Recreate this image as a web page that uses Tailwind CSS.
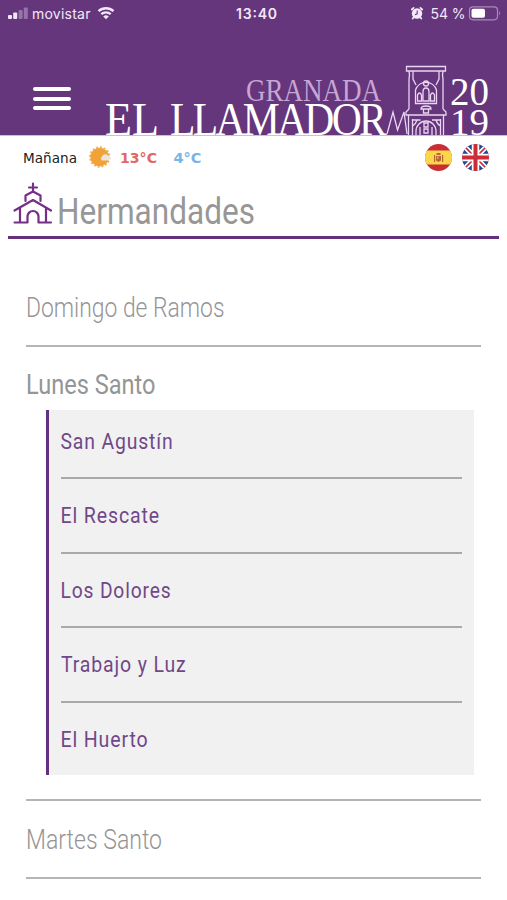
<!DOCTYPE html>
<html lang="es">
<head>
<meta charset="utf-8">
<title>El Llamador</title>
<script src="https://cdn.jsdelivr.net/npm/@tailwindcss/browser@4"></script>
</head>
<body class="bg-white w-[507px] h-[900px] overflow-hidden font-['Roboto',sans-serif]">
<header class="h-[135px] bg-[#65367c] flex flex-col text-white">
  <svg class="w-[507px] h-[28px] shrink-0 font-['Inter',sans-serif]" viewBox="0 0 507 28" fill="#f3e8f8">
    <rect x="8" y="15" width="4" height="4" rx="1"/><rect x="13.2" y="12.500" width="4" height="6.500" rx="1"/>
    <rect x="18.600" y="10" width="4" height="9" rx="1" opacity=".35"/><rect x="23.800" y="7.500" width="4" height="11.500" rx="1" opacity=".35"/>
    <text x="32" y="18.600" font-size="14" textLength="58.500">movistar</text>
    <g fill="none" stroke="#f3e8f8" stroke-width="2.300"><path d="M98.500 11.200a11 11 0 0 1 15 0M101.300 14.200a7 7 0 0 1 9.400 0"/></g>
    <path d="M103.200 16.400a4.200 4.200 0 0 1 5.600 0L106 19.300z"/>
    <text x="236" y="18.800" font-size="14" font-weight="600" textLength="41">13:40</text>
    <circle cx="417" cy="13.500" r="5.200"/><path d="M411.800 9.500l1.800-1.600M420.400 7.900l1.800 1.600M413.500 17.500l-.8 1M420.500 17.500l.8 1" stroke="#f3e8f8" stroke-width="1.800" stroke-linecap="round"/>
    <path d="M417.200 10.500v3.300l-2.200 1" fill="none" stroke="#65367c" stroke-width="1.100"/>
    <text x="430.500" y="18.800" font-size="14" textLength="35">54 %</text>
    <rect x="469.500" y="6.800" width="28" height="13" rx="3.500" fill="none" stroke="#a98ab8" stroke-width="1.200"/>
    <rect x="471.500" y="8.800" width="13.500" height="9" rx="1.800" fill="#fff"/><path d="M499 11.200q2 2 0 4z" fill="#a98ab8"/>
  </svg>
  <div class="flex h-[107px]">
    <button class="w-[38px] h-[23px] ml-[33px] mt-[59px] flex flex-col justify-between shrink-0" aria-label="Menú">
      <span class="block h-[4px] w-full rounded-full bg-white"></span><span class="block h-[4px] w-full rounded-full bg-white"></span><span class="block h-[4px] w-full rounded-full bg-white"></span>
    </button>
    <svg class="w-[407px] h-[75px] ml-[29px] mt-[32px] shrink-0 font-['Liberation_Serif',serif]" viewBox="100 60 407 75" fill="#fff">
      <text x="246" y="100.500" font-size="32.500" textLength="135" lengthAdjust="spacingAndGlyphs" fill="#c7a6d5">GRANADA</text>
      <text x="105" y="135" font-size="46" textLength="54" lengthAdjust="spacingAndGlyphs">EL</text>
      <text x="170" y="135" font-size="46" letter-spacing="-3" textLength="214" lengthAdjust="spacingAndGlyphs">LLAMADOR</text>
      <text x="450" y="105" font-size="40" textLength="39" lengthAdjust="spacingAndGlyphs">20</text>
      <text x="450" y="135" font-size="38" textLength="39" lengthAdjust="spacingAndGlyphs">19</text>
      <g fill="none" stroke="#ead5f2" stroke-width="1.300">
        <path d="M387 134l6-22 4.500 18 6.500-18 3 22"/>
        <path d="M406.500 66.500h39v4.500h-39zM409 71q1 4 0 8v30M443 71q-1 4 0 8v30M413 71v8l3 6M439 71v8l-3 6M409 109l-3 3v3h40v-3l-3-3M408.500 115v20M443.500 115v20M412.500 120h8M432 120h8.500M412.500 119v16M440.500 119v16M417 120q-1 4-4.500 6M436 120q1 4 4.500 6"/>
        <path d="M415.500 103.500V90a11 11 0 0 1 21 0v13.500z"/>
        <circle cx="426" cy="83.500" r="2.500"/><path d="M423 101v-9q0-4 3-4t3 4v9zM417.500 101v-6q2-4 4 0v6zM430.500 101v-6q2-4 4 0v6zM421 109q0-3 5-3t5 3zM423.500 109v4h5v-4"/>
        <path d="M416 135v-4a10 10 0 0 1 20 0v4M420 135v-8M432 135v-8M424 123h4v4h-4zM424 129h4v4h-4z"/>
      </g>
    </svg>
  </div>
</header>
<div class="h-[45px] flex border-t border-[#d9b5e5]">
  <svg class="w-[220px] h-[44px] shrink-0 font-['DejaVu_Sans',sans-serif]" viewBox="0 136 220 44">
    <text x="23" y="163" font-size="13.500" textLength="54" lengthAdjust="spacingAndGlyphs" fill="#222">Mañana</text>
    <circle cx="99.700" cy="157" r="9.700" fill="none" stroke="#f2b45a" stroke-width="2" stroke-dasharray="2 1.800"/><circle cx="99.700" cy="157" r="9.300" fill="#f1a338"/>
    <path d="M102 160.500a2.500 2.500 0 0 1 0-4 3.500 3.500 0 0 1 6-1 2.700 2.700 0 0 1 1 5z" fill="#ece4de"/>
    <text x="120" y="163" font-size="13.500" font-weight="700" textLength="37" lengthAdjust="spacingAndGlyphs" fill="#e26765">13°C</text>
    <text x="173.500" y="163" font-size="13.500" font-weight="700" textLength="28" lengthAdjust="spacingAndGlyphs" fill="#78b4e8">4°C</text>
  </svg>
  <div class="flex gap-[10px] ml-[205px] mt-[8px]">
    <svg class="size-[27px]" viewBox="0 0 27 27"><defs><clipPath id="c"><circle cx="13.500" cy="13.500" r="13.500"/></clipPath></defs><g clip-path="url(#c)"><path fill="#c92e35" d="M0 0h27v27H0z"/><path fill="#fbd64a" d="M0 6.500h27v14H0z"/><path fill="#b76532" d="M11 12h5v4.500L13.500 18 11 16.500zM11.500 9h4v2h-4zM9 11h1.200v7H9zM17 11h1.200v7H17z"/><path fill="#e5a65b" d="M12 12.500h1.500V15H12z"/></g></svg>
    <svg class="size-[27px]" viewBox="0 0 27 27"><g clip-path="url(#c)"><path fill="#24468a" d="M0 0h27v27H0z"/><path d="M0 0l27 27M27 0L0 27" stroke="#fff" stroke-width="5"/><path d="M0 0l27 27M27 0L0 27" stroke="#cc3342" stroke-width="1.700"/><path d="M13.500 0v27M0 13.500h27" stroke="#fff" stroke-width="7.500"/><path d="M13.500 0v27M0 13.500h27" stroke="#cc2b39" stroke-width="4"/></g></svg>
  </div>
</div>
<h1 class="mx-[8px] h-[59px] border-b-[3px] border-[#65317d] flex">
  <svg class="w-[46px] h-[56px] shrink-0" viewBox="8 180 46 56" fill="none" stroke="#752f86" stroke-width="2.200" stroke-linecap="round" stroke-linejoin="round"><path d="M33 183.500v8M29 187.500h8M25.500 201v-5.500l7.500-4 7.500 4v5.500M14.500 210.500L33 200l18 10.500M20 208v14M46 208v14M14.500 222.500h13v-6a5.500 5.500 0 0 1 11 0v6h12.500"/></svg>
  <svg class="w-[210px] h-[56px] shrink-0" viewBox="54 180 210 56"><text x="57" y="223.500" font-size="37" textLength="198" lengthAdjust="spacingAndGlyphs" fill="#979797">Hermandades</text></svg>
</h1>
<main class="mx-[26px] pt-[46px] w-[455px]">
  <section class="h-[62px] border-b-2 border-[#b5b5b5]">
    <svg class="w-[220px] h-[50px]" viewBox="26 285 220 50"><text x="26" y="317.300" font-size="27.500" font-weight="300" textLength="198.500" lengthAdjust="spacingAndGlyphs" fill="#959595">Domingo de Ramos</text></svg>
  </section>
  <section class="h-[454px] border-b-2 border-[#b5b5b5]">
    <svg class="w-[220px] h-[63px] block" viewBox="26 347 220 63"><text x="26" y="394.300" font-size="27.500" textLength="129.500" lengthAdjust="spacingAndGlyphs" fill="#959595">Lunes Santo</text></svg>
    <ul class="ml-[20px] w-[428px] h-[365px] bg-[#f1f1f1] border-l-[3px] border-[#65317d] pl-[12px] pr-[12px] text-[#704889]">
      <li class="h-[69px] border-b-2 border-[#a9a9a9]"><svg class="w-[200px] h-[66px]" viewBox="0 0 200 66" fill="currentColor"><text x="-0.500" y="39.300" font-size="22.500" textLength="113" lengthAdjust="spacingAndGlyphs" letter-spacing="1">San Agustín</text></svg></li>
      <li class="h-[74.500px] border-b-2 border-[#a9a9a9]"><svg class="w-[200px] h-[70px]" viewBox="0 0 200 70" fill="currentColor"><text x="-0.500" y="44.300" font-size="22.500" textLength="99.500" lengthAdjust="spacingAndGlyphs" letter-spacing="1">El Rescate</text></svg></li>
      <li class="h-[74.500px] border-b-2 border-[#a9a9a9]"><svg class="w-[200px] h-[70px]" viewBox="0 0 200 70" fill="currentColor"><text x="-0.500" y="44" font-size="22.500" textLength="111" lengthAdjust="spacingAndGlyphs" letter-spacing="1">Los Dolores</text></svg></li>
      <li class="h-[74.500px] border-b-2 border-[#a9a9a9]"><svg class="w-[200px] h-[70px]" viewBox="0 0 200 70" fill="currentColor"><text x="0" y="44.300" font-size="22.500" textLength="125.500" lengthAdjust="spacingAndGlyphs" letter-spacing="1">Trabajo y Luz</text></svg></li>
      <li class="h-[72px]"><svg class="w-[200px] h-[70px]" viewBox="0 0 200 70" fill="currentColor"><text x="-0.500" y="44" font-size="22.500" textLength="88" lengthAdjust="spacingAndGlyphs" letter-spacing="1">El Huerto</text></svg></li>
    </ul>
  </section>
  <section class="h-[78px] border-b-2 border-[#b5b5b5]">
    <svg class="w-[220px] h-[70px]" viewBox="26 801 220 70"><text x="26" y="848.600" font-size="27.500" font-weight="300" textLength="136" lengthAdjust="spacingAndGlyphs" fill="#959595">Martes Santo</text></svg>
  </section>
</main>
</body>
</html>
